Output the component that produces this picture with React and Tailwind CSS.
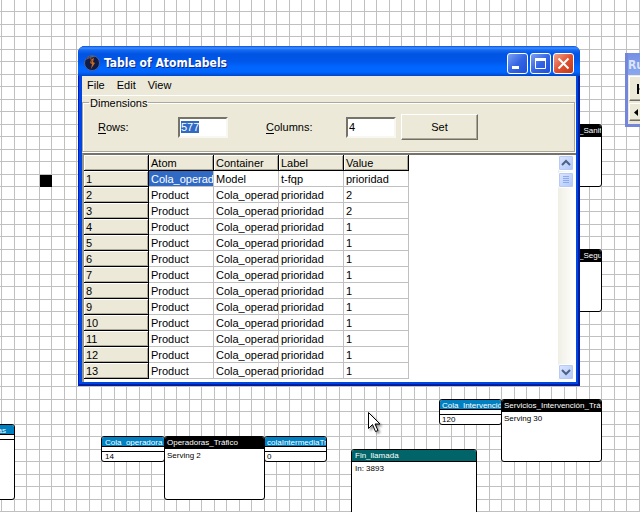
import { useEffect, useRef } from "react";

const rows = [
  ["Cola_operadora", "Model", "t-fqp", "prioridad"],
  ["Product", "Cola_operadora", "prioridad", "2"],
  ["Product", "Cola_operadora", "prioridad", "2"],
  ...Array.from({ length: 10 }, () => ["Product", "Cola_operadora", "prioridad", "1"]),
];

function ServerNode({ place, title, head = "bg-black", children, pad = "px-[2px]" }) {
  return (
    <div className={`absolute flex flex-col overflow-hidden whitespace-nowrap rounded-[3px] border border-black bg-white ${place}`}>
      <div className={`flex h-3 shrink-0 items-center border-b border-black text-white ${head} ${pad}`}>{title}</div>
      <div className={`pt-[2px] ${pad}`}>{children}</div>
    </div>
  );
}

function QueueNode({ place, title, children, pad = "px-[2px]" }) {
  return (
    <div className={`absolute flex flex-col overflow-hidden whitespace-nowrap rounded-[3px] border border-black bg-white ${place}`}>
      <div className={`h-[10px] shrink-0 overflow-hidden border-b border-black bg-[#0080c0] leading-[12px] text-white ${pad}`}>{title}</div>
      <div className="h-[5px] shrink-0 border-b border-black" />
      <div className={pad}>{children}</div>
    </div>
  );
}

function CaptionButton({ label, tone, children }) {
  return (
    <button aria-label={label} className={`flex size-[21px] items-center justify-center rounded-[3px] border border-white ${tone}`}>
      <svg width="19" height="19" viewBox="0 0 19 19" fill="none" stroke="#fff">{children}</svg>
    </button>
  );
}

function ScrollButton({ label, children }) {
  return (
    <button aria-label={label} className="flex size-4 shrink-0 items-center justify-center rounded-[2px] border border-white bg-linear-to-br from-[#dbe6ff] to-[#b0c8f8] shadow-[inset_0_0_0_1px_#b7cbf5]">
      <svg width="14" height="14" viewBox="0 0 14 14" fill="none" stroke="#4d6185">{children}</svg>
    </button>
  );
}

function Field({ id, label, value, inputRef, width }) {
  return (
    <div className="flex items-center">
      <label htmlFor={id} className={`leading-4 ${width}`}>
        <span className="underline underline-offset-2">{label[0]}</span>
        {label.slice(1)}
      </label>
      <input
        id={id}
        ref={inputRef}
        defaultValue={value}
        className="h-[21px] w-[50px] border-2 border-t-[#76746a] border-r-[#f8f7f2] border-b-[#f8f7f2] border-l-[#76746a] bg-white pb-px pl-px leading-4 outline-none selection:bg-[#316ac5] selection:text-white"
      />
    </div>
  );
}

function LabelTable() {
  const th = "h-4 overflow-hidden border-r border-b border-black bg-[#ece9d8] p-0 pt-[2px] pl-[2px] text-left font-normal leading-[13px] shadow-[inset_1px_1px_0_#fff,inset_-1px_-1px_0_#aca899]";
  return (
    <table className="w-[325px] table-fixed border-separate border-spacing-0 whitespace-nowrap">
      <thead>
        <tr>
          <th className={th} />
          {["Atom", "Container", "Label", "Value"].map((name) => (
            <th key={name} className={th}>{name}</th>
          ))}
        </tr>
      </thead>
      <tbody>
        {rows.map((cells, r) => (
          <tr key={r}>
            <th className={th}>{r + 1}</th>
            {cells.map((cell, c) => (
              <td
                key={c}
                className={`h-4 overflow-hidden border-r border-b border-[#c0c0c0] p-0 pt-[2px] pl-[2px] leading-[13px] ${r === 0 && c === 0 ? "bg-[#316ac5] text-white" : "bg-white"}`}
              >
                {cell}
              </td>
            ))}
          </tr>
        ))}
      </tbody>
    </table>
  );
}

function AtomLabelsWindow() {
  const rowsInput = useRef(null);
  useEffect(() => {
    rowsInput.current.focus();
    rowsInput.current.select();
  }, []);

  return (
    <section className="absolute top-[46px] left-[78px] flex h-[340px] w-[502px] flex-col overflow-hidden rounded-t-[7px] bg-[#0046e0] px-1 pb-1 shadow-[inset_1px_0_0_#0019cf,inset_-2px_-2px_0_#001da0]">
      <header className="-mx-1 flex h-[30px] shrink-0 items-center bg-[linear-gradient(#0a4fd8_0px,#3c8fff_2px,#1569f2_4px,#0054e3_8px,#0056e8_15px,#0066ff_21px,#0066ff_26px,#0046c8_30px)] pt-1 pr-[6px] pl-[6px]">
        <svg width="16" height="16" viewBox="0 0 16 16">
          <circle cx="8" cy="8" r="7.5" fill="#101c48" stroke="#4d5f92" />
          <path d="M2 5a7 7 0 0 1 10-3Q6 2 2 5Z" fill="#58688f" />
          <path d="M5 2l3 2 2-1-1 4 2 1-4 6 1-5-2-1 1-3Z" fill="#c66a22" />
          <path d="M5 2l3 3-1 3" stroke="#8a4216" fill="none" />
        </svg>
        <h1 className="flex-1 pl-1 font-['DejaVu_Sans_Condensed','DejaVu_Sans',sans-serif] text-[12px] leading-4 font-bold text-white [text-shadow:1px_1px_0_#0a2a90]">
          Table of AtomLabels
        </h1>
        <div className="flex gap-[2px]">
          <CaptionButton label="Minimize" tone="bg-linear-to-br from-[#7f9ff0] via-[#3465e4] to-[#1f4fd8]">
            <path d="M4 13.500h7" strokeWidth="3" />
          </CaptionButton>
          <CaptionButton label="Maximize" tone="bg-linear-to-br from-[#7f9ff0] via-[#3465e4] to-[#1f4fd8]">
            <path d="M4.500 5v9.500h10V5" />
            <path d="M4 5.500h11" strokeWidth="3" />
          </CaptionButton>
          <CaptionButton label="Close" tone="bg-linear-to-br from-[#f0a088] via-[#e05030] to-[#c03a18]">
            <path d="M4.500 4.500l10 10M14.500 4.500l-10 10" strokeWidth="2" />
          </CaptionButton>
        </div>
      </header>

      <div className="flex min-h-0 flex-1 flex-col bg-[#ece9d8]">
        <nav className="flex h-5 shrink-0 items-start gap-3 border-b border-white pt-px pl-[5px] leading-4">
          <button>File</button>
          <button>Edit</button>
          <button>View</button>
        </nav>

        <fieldset className="mr-px flex h-[56px] shrink-0 items-center border border-[#aca899] pt-[6px] pb-0 pl-[15px] shadow-[1px_1px_0_#fff,inset_1px_1px_0_#fff]">
          <legend className="-ml-[9px] h-[12px] px-px leading-[14px]">Dimensions</legend>
          <div className="flex items-center">
            <Field id="rows" label="Rows:" value="577" inputRef={rowsInput} width="w-20" />
            <div className="pl-[38px]">
              <Field id="columns" label="Columns:" value="4" width="w-20" />
            </div>
            <button className="ml-[5px] h-[26px] w-[77px] border border-t-white border-r-[#716f64] border-b-[#716f64] border-l-white bg-[#ece9d8] shadow-[inset_-1px_-1px_0_#aca899]">
              Set
            </button>
          </div>
        </fieldset>

        <div className="mt-px flex min-h-0 flex-1 border-t-2 border-l-2 border-t-[#76746a] border-l-[#9a988c] bg-white pb-[2px]">
          <div className="min-w-0 flex-1 overflow-hidden">
            <LabelTable />
          </div>
          <div className="mr-[2px] flex w-4 flex-col bg-linear-to-r from-[#f0efe6] to-[#fefefb]">
            <ScrollButton label="Scroll up"><path d="M3 9l4-4 4 4" strokeWidth="2" /></ScrollButton>
            <div className="flex flex-1 flex-col pt-px">
              <ScrollButton label="Scroll position"><path d="M4 3.500h6M4 5.500h6M4 7.500h6M4 9.500h6" stroke="#8caaf0" /></ScrollButton>
            </div>
            <ScrollButton label="Scroll down"><path d="M3 5l4 4 4-4" strokeWidth="2" /></ScrollButton>
          </div>
        </div>
      </div>
    </section>
  );
}

function RunWindow() {
  const button = "flex w-10 shrink-0 items-center border border-t-white border-r-[#716f64] border-b-[#716f64] border-l-white bg-[#ece9d8] shadow-[inset_-1px_-1px_0_#aca899]";
  return (
    <section className="absolute top-[53px] left-[625px] flex h-[74px] w-20 flex-col overflow-hidden border-[3px] border-t-0 border-[#7386dc] bg-[#ece9d8]">
      <h2 className="-mx-[3px] h-[22px] shrink-0 bg-linear-to-b from-[#7590e4] via-[#7f9ce9] to-[#8aa8f0] pt-1 pl-[3px] font-['DejaVu_Sans_Condensed','DejaVu_Sans',sans-serif] text-[12px] leading-4 font-bold text-[#dbe4fa]">
        Run
      </h2>
      <div className="flex flex-col gap-[2px] bg-[#ece9d8] pt-px pl-px">
        <button aria-label="Rewind" className={`h-[25px] pl-[7px] ${button}`}>
          <svg width="14" height="12" viewBox="0 0 14 12"><path d="M0 1h2v10H0zM9 0v12L2 6z" /></svg>
        </button>
        <button aria-label="Slower" className={`h-[18px] pl-1 ${button}`}>
          <svg width="5" height="7" viewBox="0 0 5 7"><path d="M4 0v7L0 3.500z" /></svg>
        </button>
      </div>
    </section>
  );
}

export default function App() {
  return (
    <main className="relative h-screen w-full overflow-hidden bg-white bg-[linear-gradient(to_right,#c0c0c0_1px,transparent_1px,transparent_13px,#c0c0c0_13px,#c0c0c0_14px,transparent_14px),linear-gradient(to_bottom,#c0c0c0_1px,transparent_1px,transparent_13px,#c0c0c0_13px,#c0c0c0_14px,transparent_14px)] bg-[length:25px_25px] bg-[position:1px_11px] font-['Liberation_Sans',Arial,sans-serif] text-[11px] text-black">
      <div className="text-[8px] leading-[10px]">
        <div className="absolute top-[175px] left-[40px] size-3 bg-black" />
        <ServerNode place="top-[124px] left-[501px] h-[63px] w-[101px]" title={<span className="pl-[75px]">_Sanitarios</span>} />
        <ServerNode place="top-[249px] left-[501px] h-[63px] w-[101px]" title={<span className="pl-[75px]">_Seguridad</span>} />
        <QueueNode place="top-[424px] -left-[48px] h-[76px] w-[63px]" title={<span className="block w-[51px] text-right">llamadas</span>} />
        <QueueNode place="top-[436px] left-[101px] h-[26px] w-[64px]" title="Cola_operadora" pad="px-[3px]">14</QueueNode>
        <QueueNode place="top-[436px] left-[264px] h-[26px] w-[63px]" title="colaIntermediaTráfico">0</QueueNode>
        <ServerNode place="top-[436px] left-[164px] h-[64px] w-[101px]" title="Operadoras_Tráfico">Serving 2</ServerNode>
        <ServerNode place="top-[449px] left-[351px] h-[66px] w-[126px]" title="Fin_llamada" head="bg-[#006468]" pad="px-[3px]">In: 3893</ServerNode>
        <QueueNode place="top-[399px] left-[439px] h-[26px] w-[63px]" title="Cola_Intervención">120</QueueNode>
        <ServerNode place="top-[399px] left-[501px] h-[63px] w-[101px]" title="Servicios_Intervención_Tráfico">Serving 30</ServerNode>
      </div>
      <RunWindow />
      <AtomLabelsWindow />
      <svg className="absolute top-[411px] left-[367px] drop-shadow-[2px_2px_1px_#0006]" width="14" height="23" viewBox="0 0 14 23" fill="#fff" stroke="#000">
        <path d="M1.500 1.500v16l4-4 3 7 2.500-1-3-6.500h5z" />
      </svg>
    </main>
  );
}
